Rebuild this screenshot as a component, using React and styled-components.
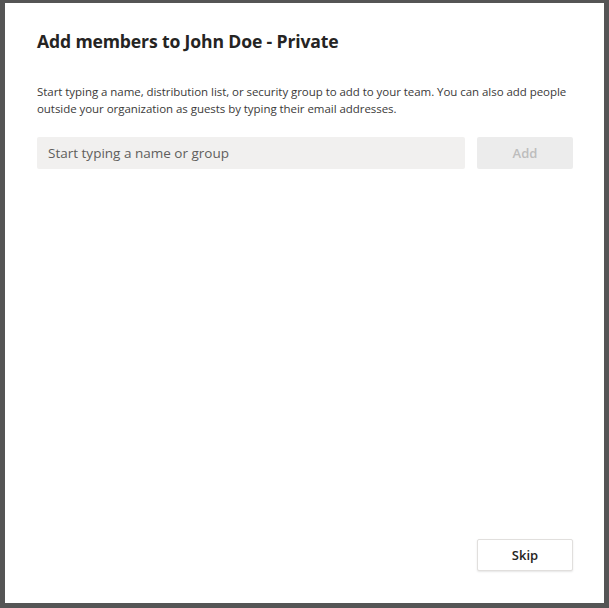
import React from "react";
import styled, { createGlobalStyle } from "styled-components";

const Global = createGlobalStyle`
  html, body {
    margin: 0;
    padding: 0;
    height: 100%;
    background: #555555;
  }
  #root {
    height: 100%;
  }
`;

const Backdrop = styled.div`
  box-sizing: border-box;
  width: 609px;
  height: 608px;
  padding: 3px 5px 5px 5px;
  background: #555555;
  display: flex;
`;

const Dialog = styled.div`
  box-sizing: border-box;
  flex: 1;
  background: #ffffff;
  padding: 26px 31px 32px 32px;
  display: flex;
  flex-direction: column;
  font-family: "Open Sans", "Noto Sans", sans-serif;
  color: #252423;
`;

const Title = styled.h1`
  margin: 0;
  font-size: 17.6px;
  font-weight: 700;
  line-height: 24px;
  color: #252423;
  letter-spacing: -0.15px;
`;

const Description = styled.p`
  margin: 30px 0 0 0;
  font-size: 11.5px;
  line-height: 17px;
  color: #3b3a39;
  letter-spacing: -0.05px;
`;

const Row = styled.div`
  display: flex;
  gap: 12px;
  margin-top: 20px;
`;

const Input = styled.input`
  box-sizing: border-box;
  flex: 1;
  height: 32px;
  border: none;
  border-radius: 2px;
  background: #f1f0ef;
  padding: 0 11px;
  font-family: inherit;
  font-size: 13.5px;
  color: #252423;
  outline: none;
  &::placeholder {
    color: #605e5c;
  }
`;

const Button = styled.button`
  box-sizing: border-box;
  width: 96px;
  height: 32px;
  border-radius: 2px;
  font-family: inherit;
  font-size: 13px;
  font-weight: 600;
  cursor: pointer;
  border: 1px solid ${(p) => (p.$disabled ? "transparent" : "#e1dfdd")};
  background: ${(p) => (p.$disabled ? "#ececec" : "#ffffff")};
  color: ${(p) => (p.$disabled ? "#bdbdbd" : "#252423")};
  box-shadow: ${(p) => (p.$disabled ? "none" : "0 1px 2px rgba(0,0,0,0.1)")};
`;

const Spacer = styled.div`
  flex: 1;
`;

const Footer = styled.div`
  display: flex;
  justify-content: flex-end;
`;

export default function App() {
  return (
    <>
      <Global />
      <Backdrop>
        <Dialog>
          <Title>Add members to John Doe - Private</Title>
          <Description>
            Start typing a name, distribution list, or security group to add to your team. You can also add people
            outside your organization as guests by typing their email addresses.
          </Description>
          <Row>
            <Input placeholder="Start typing a name or group" />
            <Button $disabled>Add</Button>
          </Row>
          <Spacer />
          <Footer>
            <Button>Skip</Button>
          </Footer>
        </Dialog>
      </Backdrop>
    </>
  );
}
